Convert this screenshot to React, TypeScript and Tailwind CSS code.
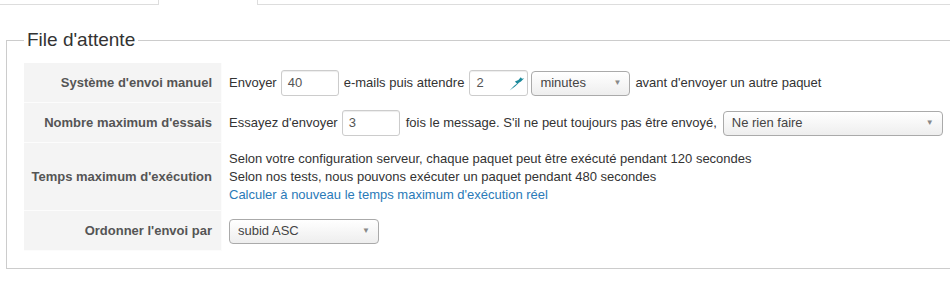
import React from 'react';

const font = { fontFamily: '"Liberation Sans", Arial, sans-serif' };

function TextInput({ value, width, icon }: { value: string; width: string; icon?: boolean }) {
  return (
    <div className={`relative inline-flex h-[26px] items-center rounded-[3px] border border-[#cccccc] bg-white px-[6px] shadow-[inset_0_1px_1px_rgba(0,0,0,0.075)] ${width}`}>
      <span className="text-[13px] text-[#555]">{value}</span>
      {icon && (
        <svg className="absolute right-[2px] top-[4px]" width="17" height="17" viewBox="0 0 16 16">
          <path d="M1.5 14.5 C4.5 11.5 6.5 9.5 8.5 8.3 L6.5 6.2 L9.8 4.6 L12 2 L13.2 3.6 L15.2 3.1 L12.2 6.2 L10.2 7.4 C8 9.8 5 12.4 1.5 14.5 Z" fill="#1d8a9c" />
        </svg>
      )}
    </div>
  );
}

function Select({ value, width }: { value: string; width: string }) {
  return (
    <div className={`inline-flex h-[25px] items-center justify-between rounded-[4px] border border-[#aaaaaa] bg-gradient-to-b from-white to-[#eeeeee] pl-[8px] pr-[8px] ${width}`}>
      <span className="text-[13px] text-[#444]">{value}</span>
      <span className="text-[8px] text-[#888]">▼</span>
    </div>
  );
}

function Row({ label, children, tall }: { label: string; children: React.ReactNode; tall?: boolean }) {
  return (
    <div className="flex">
      <div className={`flex w-[198px] shrink-0 items-center justify-end border-b border-r border-[#fcfcfc] bg-[#f4f4f4] pr-[9px] text-[13px] font-bold text-[#555] ${tall ? 'h-[68px]' : 'h-[40px]'}`}>
        {label}
      </div>
      <div className="flex flex-1 items-center pl-[7px] text-[13px] text-[#333]">{children}</div>
    </div>
  );
}

export default function App() {
  return (
    <div className="h-[300px] w-[950px] overflow-hidden bg-white" style={font}>
      {/* tabs */}
      <div className="flex h-[5px]">
        <div className="w-[159px] border-b border-r border-[#dddddd]" />
        <div className="w-[98px]" />
        <div className="flex-1 border-b border-l border-[#dddddd]" />
      </div>

      <fieldset className="ml-[6px] mr-[-10px] mt-[23px] h-[241px] border border-[#cccccc] pl-[17px] pr-[12px]">
        <legend className="ml-0 px-[3px] text-[19px] leading-[24px] text-[#333]">File d'attente</legend>
        <div className="mt-[11px] w-[924px]">
          <Row label="Système d'envoi manuel">
            <span className="mr-[4px]">Envoyer</span>
            <TextInput value="40" width="w-[58px]" />
            <span className="mx-[5px]">e-mails puis attendre</span>
            <TextInput value="2" width="w-[59px]" icon />
            <span className="w-[3px]" />
            <Select value="minutes" width="w-[99px]" />
            <span className="ml-[5px]">avant d'envoyer un autre paquet</span>
          </Row>
          <Row label="Nombre maximum d'essais">
            <span className="mr-[4px]">Essayez d'envoyer</span>
            <TextInput value="3" width="w-[58px]" />
            <span className="mx-[6px]">fois le message. S'il ne peut toujours pas être envoyé,</span>
            <Select value="Ne rien faire" width="w-[220px]" />
          </Row>
          <Row label="Temps maximum d'exécution" tall>
            <div className="leading-[18px]">
              <div>Selon votre configuration serveur, chaque paquet peut être exécuté pendant 120 secondes</div>
              <div>Selon nos tests, nous pouvons exécuter un paquet pendant 480 secondes</div>
              <div className="text-[#2a7ab8]">Calculer à nouveau le temps maximum d'exécution réel</div>
            </div>
          </Row>
          <Row label="Ordonner l'envoi par">
            <Select value="subid ASC" width="w-[150px]" />
          </Row>
        </div>
      </fieldset>
    </div>
  );
}
